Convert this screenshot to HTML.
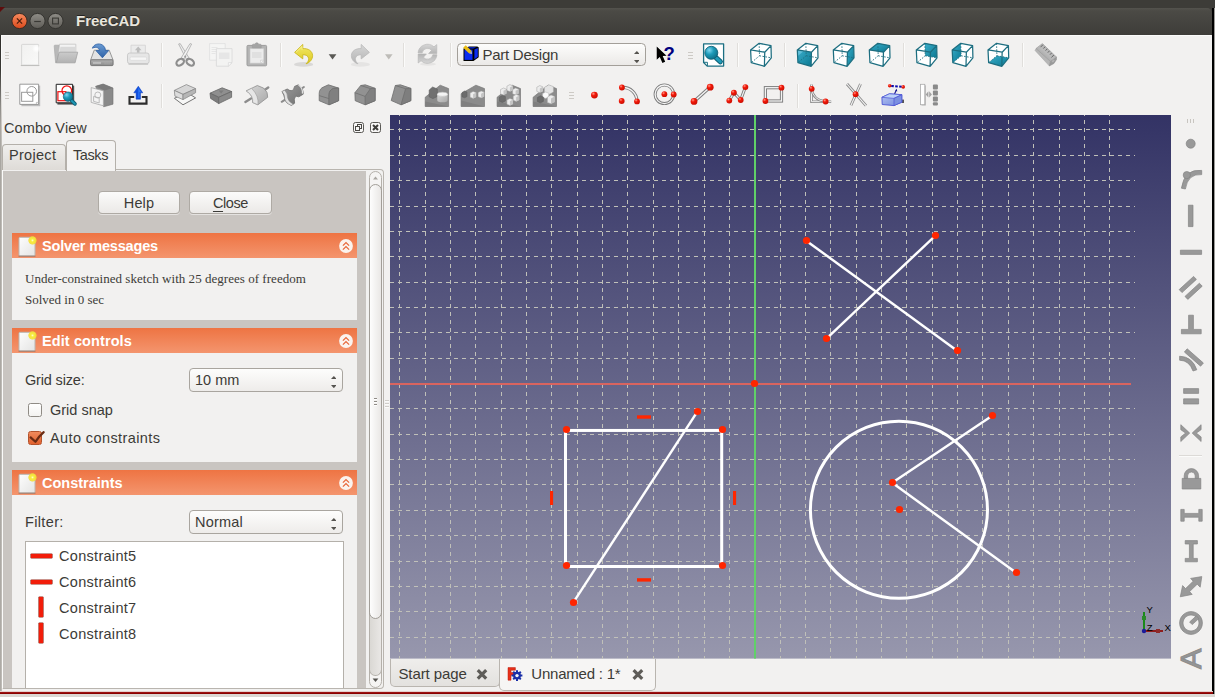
<!DOCTYPE html>
<html>
<head>
<meta charset="utf-8">
<title>FreeCAD</title>
<style>
html,body{margin:0;padding:0;}
body{width:1215px;height:697px;overflow:hidden;position:relative;background:#f2f1f0;font-family:"Liberation Sans","DejaVu Sans",sans-serif;font-size:14px;color:#3c3b37;}
.abs{position:absolute;}
.t{position:absolute;white-space:nowrap;line-height:18px;font-size:14.5px;color:#3c3b37;}
#topstrip{left:0;top:0;width:1215px;height:14px;background:#3d3c38;}
#titlebar{left:0;top:8px;width:1212px;height:27px;background:linear-gradient(#54534e 0,#4b4a45 3px,#3e3d39 100%);border-top-left-radius:5px;border-top-right-radius:5px;}
#title{left:76px;top:12px;color:#e9e5dc;font-weight:bold;font-size:15px;line-height:18px;text-shadow:0 -1px 0 #222;}
.wbtn{width:15px;height:15px;border-radius:50%;top:13px;box-sizing:border-box;}
#rightedge{left:1212px;top:8px;width:2px;height:686px;background:#000;}
#rightgray{left:1214px;top:8px;width:1px;height:689px;background:#9c9a97;}
#leftedge{left:0;top:35px;width:1px;height:656px;background:linear-gradient(#2f2e2b 0,#3a3935 35px,#8b8985 70px,#a9a6a1 90px,#aeaba6 100%);}
#leftedge2{left:1px;top:35px;width:1px;height:656px;background:linear-gradient(#fbfbfa 0,#fbfbfa 40px,#d0cdc9 80px,#bebbb6 110px,#bebbb6 100%);}
#bottomred{left:0;top:691px;width:1213px;height:4px;background:linear-gradient(to bottom,#e4cfcd 0,#e4cfcd 1px,#9a1212 1px,#9a1212 2px,#8b0000 2px,#8b0000 3px,#c9aaa6 3px,#c9aaa6 4px);}
#bottomgray{left:0;top:694px;width:1215px;height:3px;background:#dbd8d4;}
/* dock */
.tab{position:absolute;box-sizing:border-box;border:1px solid #b4b0aa;border-bottom:none;border-radius:4px 4px 0 0;}
#pane{left:2px;top:169px;width:382px;height:520px;box-sizing:border-box;border:1px solid #b9b5af;border-left-color:#fbfbfa;border-radius:0 4px 4px 0;background:#f2f1f0;}
#panegray{left:3px;top:171px;width:363px;height:517px;background:#c9c5c1;}
.btn{position:absolute;box-sizing:border-box;border:1px solid #aeaaa4;border-radius:4px;background:linear-gradient(#fbfbfa,#ebe9e7);text-align:center;font-size:14.5px;line-height:22px;color:#3c3b37;box-shadow:0 1px 0 rgba(255,255,255,.5);}
.hdr{position:absolute;left:12px;width:345px;height:25px;background:linear-gradient(#ee7443,#f4956e);}
.hdr .ht{position:absolute;left:30px;top:3.600px;font-weight:bold;font-size:14.5px;line-height:18px;color:#fff;white-space:nowrap;}
.hdr .pg{position:absolute;left:6px;top:3px;}
.hdr .chev{position:absolute;left:327px;top:6px;}
.box{position:absolute;left:12px;width:345px;background:#f2f1f0;}
.combo{position:absolute;box-sizing:border-box;left:189px;width:154px;height:24px;border:1px solid #a9a59f;border-radius:4px;background:linear-gradient(#fdfdfc,#eeecea);}
.combo .ct{position:absolute;left:5px;top:2.500px;font-size:14.5px;line-height:18px;white-space:nowrap;}
.cb{position:absolute;box-sizing:border-box;left:28px;width:14px;height:14px;border:1px solid #8f8b85;border-radius:2.5px;background:linear-gradient(#fff,#f3f2f0);}
.serif{font-family:"Liberation Serif","DejaVu Serif",serif;}
</style>
</head>
<body>
<div id="topstrip" class="abs"></div>
<div id="titlebar" class="abs"></div>
<div id="title" class="abs">FreeCAD</div>
<svg class="abs" style="left:10px;top:11px" width="56" height="20" viewBox="10 11 56 20">
<defs>
<linearGradient id="gclose" x1="0" y1="0" x2="0" y2="1"><stop offset="0" stop-color="#f58a5e"/><stop offset="1" stop-color="#dc4a1c"/></linearGradient>
<linearGradient id="ggray" x1="0" y1="0" x2="0" y2="1"><stop offset="0" stop-color="#8f8d87"/><stop offset="1" stop-color="#5e5c57"/></linearGradient>
</defs>
<circle cx="19.5" cy="21" r="7.6" fill="url(#gclose)" stroke="#3a2a22" stroke-width="1"/>
<path d="M16.900 18.400l5.200 5.200M22.100 18.400l-5.200 5.200" stroke="#4a1d0c" stroke-width="1.250" fill="none"/>
<circle cx="37.5" cy="21" r="7.6" fill="url(#ggray)" stroke="#34332f" stroke-width="1"/>
<path d="M34.200 21.500h6.600" stroke="#3a3935" stroke-width="1.200"/>
<circle cx="55.5" cy="21" r="7.6" fill="url(#ggray)" stroke="#34332f" stroke-width="1"/>
<rect x="52.6" y="18.1" width="5.8" height="5.8" fill="none" stroke="#3a3935" stroke-width="1.100"/>
</svg>
<svg class="abs" style="left:0;top:7px" width="6" height="6"><path d="M0 0h5L0 5z" fill="#5e0d0d"/></svg>
<!-- toolbars (rows 1 and 2) -->
<div class="abs" style="left:1px;top:35px;width:1210px;height:1px;background:#fbfbfa"></div>
<svg class="abs" style="left:0;top:35px" width="1212" height="80" viewBox="0 35 1212 80">
<defs>
<linearGradient id="gPaper" x1="0" y1="0" x2="1" y2="1"><stop offset="0" stop-color="#f1f1f0"/><stop offset="1" stop-color="#f9f9f8"/></linearGradient>
<radialGradient id="gWhiteGlow"><stop offset="0" stop-color="#fff"/><stop offset="0.3" stop-color="#fff" stop-opacity=".9"/><stop offset="1" stop-color="#fff" stop-opacity="0"/></radialGradient>
<linearGradient id="gRuler" x1="0" y1="1" x2="1" y2="0"><stop offset="0" stop-color="#8e8e8e"/><stop offset="0.5" stop-color="#bcbcbc"/><stop offset="1" stop-color="#9e9e9e"/></linearGradient>
<linearGradient id="gFold" x1="0" y1="0" x2="0" y2="1"><stop offset="0" stop-color="#cbcbcb"/><stop offset="1" stop-color="#b2b2b2"/></linearGradient>
<linearGradient id="gDrive" x1="0" y1="0" x2="0" y2="1"><stop offset="0" stop-color="#b4b4b4"/><stop offset="1" stop-color="#8a8a8a"/></linearGradient>
<linearGradient id="gBlueArr" x1="0" y1="0" x2="0" y2="1"><stop offset="0" stop-color="#6b9bd3"/><stop offset="1" stop-color="#2f63a8"/></linearGradient>
<linearGradient id="gYel" x1="0" y1="0" x2="0" y2="1"><stop offset="0" stop-color="#f3ea6a"/><stop offset="1" stop-color="#dcc81e"/></linearGradient>
<linearGradient id="gGrayArr" x1="0" y1="0" x2="0" y2="1"><stop offset="0" stop-color="#d6d6d6"/><stop offset="1" stop-color="#b4b4b4"/></linearGradient>
<radialGradient id="gLens" cx="0.35" cy="0.3" r="0.75"><stop offset="0" stop-color="#7fd6f0"/><stop offset="0.45" stop-color="#1c9ab8"/><stop offset="1" stop-color="#0c6c86"/></radialGradient>
<linearGradient id="gTeal" x1="0" y1="0" x2="1" y2="1"><stop offset="0" stop-color="#3aaecb"/><stop offset="1" stop-color="#0b7891"/></linearGradient>
<linearGradient id="gCombo" x1="0" y1="0" x2="0" y2="1"><stop offset="0" stop-color="#fdfdfc"/><stop offset="1" stop-color="#ebe9e7"/></linearGradient>
<radialGradient id="gRed" cx="0.35" cy="0.3" r="0.8"><stop offset="0" stop-color="#ff9a8a"/><stop offset="0.35" stop-color="#f21a0a"/><stop offset="1" stop-color="#c40b00"/></radialGradient>
<linearGradient id="gG1" x1="0" y1="0" x2="1" y2="1"><stop offset="0" stop-color="#d8d8d8"/><stop offset="1" stop-color="#a8a8a8"/></linearGradient>
<linearGradient id="gG2" x1="0" y1="0" x2="1" y2="1"><stop offset="0" stop-color="#9c9c9c"/><stop offset="1" stop-color="#6e6e6e"/></linearGradient>
<linearGradient id="gG3" x1="0" y1="0" x2="0" y2="1"><stop offset="0" stop-color="#8e8e8e"/><stop offset="1" stop-color="#7a7a7a"/></linearGradient>
<linearGradient id="gBlueBox" x1="0" y1="0" x2="1" y2="1"><stop offset="0" stop-color="#b7c6f2"/><stop offset="1" stop-color="#6f86dd"/></linearGradient>
<g id="cubeFaces" fill="#fff" stroke="none"><path d="M1.6 6.9L10.15 0.3L22 2.6L22.3 14.8L15.4 23.3L2.25 19.7z"/></g>
<g id="cubeLines" fill="none" stroke="#1d6e80" stroke-width="1.25" stroke-linejoin="round"><path d="M1.6 6.9L15.75 9.2L15.4 23.3L2.25 19.7zM1.6 6.9L10.15 0.3L22 2.6L15.75 9.2M22 2.6L22.3 14.8L15.4 23.3"/><path d="M10.15 0.3L10.5 12.8L2.25 19.7M10.5 12.8L22.3 14.8" stroke-width="0.9" stroke-dasharray="1.6 1.4"/></g>
<g id="rdot"><circle r="3.4" fill="url(#gRed)"/></g>
<g id="rdots"><circle r="2.9" fill="url(#gRed)"/></g>
</defs>
<!-- handles -->
<g stroke="#cdcac5" stroke-width="1" shape-rendering="crispEdges">
<path d="M5 52.5h4M5 55.5h4M5 58.5h4M5 92.5h4M5 95.5h4M5 98.5h4M688 52.5h5M688 55.5h5M688 58.5h5M569 92.5h5M569 95.5h5M569 98.5h5"/>
</g>
<!-- separators -->
<g stroke-width="1" shape-rendering="crispEdges"><path d="M161.5 43v24M280.5 43v24M403.5 43v24M450.5 43v24M737.5 43v24M784.5 43v24M903.5 43v24M1022.5 43v24M161.5 84v24M797.5 84v24" stroke="#e0dedb"/><path d="M162.5 43v24M281.5 43v24M404.5 43v24M451.5 43v24M738.5 43v24M785.5 43v24M904.5 43v24M1023.5 43v24M162.5 84v24M798.5 84v24" stroke="#fbfbfa"/></g>
<!-- new doc (disabled) -->
<g><rect x="21.600" y="44.400" width="17" height="20.800" rx=".6" fill="url(#gPaper)" stroke="#d4d4d2" stroke-width=".9"/><path d="M20.800 65.500h18.600" stroke="#c0c0be" stroke-width="1.100"/><circle cx="36.400" cy="48.600" r="4.400" fill="url(#gWhiteGlow)"/></g>
<!-- open folder (disabled) -->
<g><path d="M54.200 45.900q0-.7.700-.7h4.300l-1.400 15l-1.600 2.600h-.6z" fill="#b9b9b9" stroke="#a9a9a9" stroke-width=".7"/><path d="M59.600 44.200h16.200v9.200h-17.200z" fill="#f3f3f3" stroke="#c4c4c4" stroke-width=".8"/><path d="M60.400 46.800h15v6h-15.800z" fill="#d9d9d9"/><path d="M59.200 52.200h18.500l-2.600 10.600H56.300z" fill="url(#gFold)" stroke="#a2a2a2" stroke-width=".8" stroke-linejoin="round"/></g>
<!-- save -->
<g><path d="M94.2 50.2h15l3.9 9.9H90.6z" fill="#e3e3e3" stroke="#8f8f8f" stroke-width=".9"/><rect x="90.6" y="59.8" width="22.5" height="5.8" rx="1" fill="url(#gDrive)" stroke="#6f6f6f" stroke-width=".9"/><path d="M93 63h8" stroke="#d8d8d8" stroke-width="1"/><path d="M105 61.5v3M107 61.5v3M109 61.5v3" stroke="#a9a9a9" stroke-width=".8"/><path d="M92.4 48.2c1-3.6 6.2-5.6 10-3.2c2.3 1.5 3 3.6 3 5.6h3.2l-6.2 7.2l-6.4-7.2h3.4c0-2.6-3-4.4-7-2.4z" fill="url(#gBlueArr)" stroke="#2a5da3" stroke-width=".8" stroke-linejoin="round"/></g>
<!-- print (disabled) -->
<g><path d="M131 45.2h14.4v9H131z" fill="#ebebeb" stroke="#d2d2d2" stroke-width=".8"/><path d="M138.2 46.6l3.3 3.6h-2v2.6h-2.6v-2.6h-2z" fill="#bdbdbd"/><rect x="127.5" y="53" width="21.6" height="10.6" rx="2.2" fill="#e6e6e6" stroke="#c6c6c6" stroke-width=".9"/><rect x="130" y="57" width="16.6" height="3.4" rx="1.2" fill="#f6f6f6" stroke="#d5d5d5" stroke-width=".6"/><path d="M128.5 64.2h19.6" stroke="#bfbfbf" stroke-width="1"/></g>
<!-- cut -->
<g><path d="M178.6 44l1.6-.4l9.6 15.6l-2.8 1.4z" fill="#ededed" stroke="#a9a9a9" stroke-width=".8"/><path d="M191.6 44l-1.6-.4l-9.6 15.6l2.8 1.4z" fill="#f3f3f3" stroke="#a9a9a9" stroke-width=".8"/><ellipse cx="180.2" cy="62.2" rx="4.2" ry="2.9" transform="rotate(-38 180.2 62.2)" fill="none" stroke="#8e8e8e" stroke-width="2.2"/><ellipse cx="190.2" cy="62.2" rx="4.2" ry="2.9" transform="rotate(38 190.2 62.2)" fill="none" stroke="#8e8e8e" stroke-width="2.2"/><circle cx="185.2" cy="56.6" r="1" fill="#9a9a9a"/></g>
<!-- copy (disabled) -->
<g><path d="M209.6 43.6h15.6v16.6h-15.6z" fill="#f5f5f4" stroke="#dedede" stroke-width=".8"/><path d="M211.5 47.5h6M211.5 49.5h6M211.5 51.5h6M211.5 53.5h4" stroke="#e2e2e2" stroke-width=".8"/><path d="M216.4 48.6h15.6v14l-3.6 3.6h-12z" fill="#f3f3f2" stroke="#d8d8d8" stroke-width=".8"/><path d="M219 52.5h10.5v6.5H219z" fill="#e6e6e6"/><path d="M228.4 66.2v-3.6h3.6z" fill="#fafafa" stroke="#d8d8d8" stroke-width=".7"/></g>
<!-- paste (disabled) -->
<g><rect x="247" y="45.4" width="19.6" height="20.4" rx="1" fill="#b4b4b4" stroke="#9c9c9c" stroke-width="1"/><path d="M250 48.6h13.8v14.6H250z" fill="#ececec" stroke="#c8c8c8" stroke-width=".6"/><path d="M252 52h9.5v6H252z" fill="#e0e0e0"/><path d="M260.6 63.2v-3h3.2z" fill="#fafafa" stroke="#c4c4c4" stroke-width=".6"/><path d="M252.4 47.8v-2.6q0-1 1-1h1.6q.4-1.4 1.8-1.4t1.8 1.4h1.6q1 0 1 1v2.6z" fill="#a4a4a4" stroke="#9a9a9a" stroke-width=".6"/></g>
<!-- undo -->
<g><ellipse cx="303.6" cy="64.4" rx="9.6" ry="2.4" fill="#000" opacity=".1"/><path d="M294.6 52.4l8.2-8v4.2c5.6-.4 9.6 2.6 9.8 6.8c.2 4-3 7.4-6.6 8.4c1.8-1.6 2.9-3.4 2.6-5.4c-.3-2.3-2.600-3.800-5.800-3.700v4.200z" fill="url(#gYel)" stroke="#c9b51a" stroke-width=".8" stroke-linejoin="round"/><path d="M296 52.300l6-5.800v3.200" fill="none" stroke="#faf5a8" stroke-width=".8" opacity=".8"/></g>
<path d="M328.7 54.2h7.700l-3.850 5.300z" fill="#5a5955"/>
<!-- redo (disabled) -->
<g><ellipse cx="360.4" cy="64.4" rx="9.600" ry="2.400" fill="#000" opacity=".05"/><path d="M369.400 52.400l-8.200-8v4.200c-5.600-.4-9.600 2.600-9.800 6.800c-.2 4 3 7.400 6.600 8.400c-1.800-1.600-2.900-3.400-2.600-5.400c.3-2.300 2.600-3.800 5.800-3.700v4.200z" fill="url(#gGrayArr)" stroke="#b9b9b9" stroke-width=".8" stroke-linejoin="round"/></g>
<path d="M385 54.200h7.600l-3.800 5.300z" fill="#bebcb8"/>
<!-- refresh (disabled) -->
<g fill="url(#gGrayArr)" stroke="#b4b4b4" stroke-width=".6" stroke-linejoin="round"><ellipse cx="428" cy="64.200" rx="8" ry="1.600" fill="#000" opacity=".05" stroke="none"/><path id="rfr" d="M418.050 52.800A9.500 9.500 0 0 1 433.980 46.850L436.800 44.600V53.600H428.600L431.640 50.330A5.400 5.400 0 0 0 422.180 52.860z"/><use href="#rfr" transform="rotate(180 427.500 53.800)"/></g>
<!-- workbench icon drawn later on top (html) -->
<!-- whats this cursor -->
<path d="M656.700 46.500v13.300l3.100-2.800l2.600 6l2.800-1.200l-2.500-5.700l3.900-.3z" fill="#000" stroke="#fff" stroke-width="1" stroke-linejoin="round" paint-order="stroke"/>
<!-- zoom fit -->
<g><path d="M703.600 43.900h20v22.200h-16.400l-3.600-3.600z" fill="#fff" stroke="#1b6f82" stroke-width="1.3" stroke-linejoin="round"/><path d="M703.800 62.300h3.600v3.600" fill="none" stroke="#1b6f82" stroke-width="1"/><path d="M716.200 57.800l4.100 3.900" stroke="#0e6178" stroke-width="5.200" stroke-linecap="round"/><path d="M716.600 58.200l3.700 3.500" stroke="#1f9ab8" stroke-width="3.200" stroke-linecap="round"/><circle cx="711.300" cy="52.800" r="6.500" fill="url(#gLens)" stroke="#0e6178" stroke-width=".9"/></g>
<!-- cubes -->
<g transform="translate(749 43)"><use href="#cubeFaces"/><use href="#cubeLines"/></g>
<g transform="translate(795.700 43)"><use href="#cubeFaces"/><path d="M1.600 6.900L15.750 9.200L15.400 23.300L2.250 19.700z" fill="url(#gTeal)"/><path d="M1.6 6.900L8 8l-5.900 5z" fill="#7fd0ea" opacity=".6"/><use href="#cubeLines"/></g>
<g transform="translate(831.700 43)"><use href="#cubeFaces"/><path d="M15.750 9.200L22 2.600L22.300 14.800L15.400 23.300z" fill="url(#gTeal)"/><use href="#cubeLines"/></g>
<g transform="translate(867.700 43)"><use href="#cubeFaces"/><path d="M1.600 6.900L10.150 0.300L22 2.600L15.750 9.200z" fill="url(#gTeal)"/><use href="#cubeLines"/></g>
<g transform="translate(914.700 43)"><use href="#cubeFaces"/><path d="M10.150 0.300L22 2.600L22.300 14.800L10.500 12.800z" fill="url(#gTeal)"/><use href="#cubeLines"/></g>
<g transform="translate(950.600 43)"><use href="#cubeFaces"/><path d="M1.600 6.900L10.150 0.300L10.500 12.800L2.250 19.700z" fill="url(#gTeal)"/><use href="#cubeLines"/></g>
<g transform="translate(986.400 43)"><use href="#cubeFaces"/><path d="M2.250 19.700L10.500 12.800L22.300 14.800L15.400 23.300z" fill="url(#gTeal)"/><use href="#cubeLines"/></g>
<!-- ruler (disabled) -->
<g stroke-linejoin="round"><path d="M1035 50.400L1036 48.500L1050.400 61.400L1049.400 66z" fill="#b6b6b6" stroke="#a4a4a4" stroke-width=".5"/><path d="M1050.400 61.400L1056.500 57L1056.500 59.500L1054 63.400L1049.400 66z" fill="#9a9a9a" stroke="#8e8e8e" stroke-width=".5"/><path d="M1036 48.500L1042.300 43.600L1056.500 57L1050.400 61.400z" fill="url(#gRuler)" stroke="#909090" stroke-width=".5"/><path d="M1042.90 44.72L1040.56 47.19M1045.08 46.78L1043.43 48.52M1047.27 48.84L1045.62 50.58M1049.45 50.90L1047.80 52.65M1051.63 52.96L1049.99 54.71M1053.82 55.02L1051.48 57.50" stroke="#5e5e5e" stroke-width=".9"/><ellipse cx="1053.200" cy="61" rx="1.600" ry="1" transform="rotate(-36 1053.200 61)" fill="#b4b4b4"/></g>

<!-- new sketch -->
<g><path d="M21.400 85.600h18.800v20.600H21.400z" fill="#bdbdbd"/><path d="M19.800 84.200h18.800v20.200H19.800z" fill="#fff" stroke="#8e8e8e" stroke-width=".9"/><circle cx="31.700" cy="91.300" r="4.800" fill="none" stroke="#9a9a9a" stroke-width="1"/><rect x="21.600" y="92.300" width="11.200" height="9" fill="none" stroke="#9a9a9a" stroke-width="1"/><path d="M36.400 104.400v-2h2.200" fill="none" stroke="#aaa" stroke-width=".7"/></g>
<!-- edit sketch -->
<g><path d="M57.400 85.600h16.800v19H57.400z" fill="#555"/><path d="M56.200 84.300h16.400v18.500H56.200z" fill="#fff" stroke="#222" stroke-width="1"/><circle cx="66.800" cy="90.600" r="4.800" fill="none" stroke="#f01010" stroke-width="1.200"/><rect x="57.900" y="91.700" width="8" height="9" fill="none" stroke="#f01010" stroke-width="1.200"/><path d="M71.400 100.400l3.600 3.500" stroke="#0e6178" stroke-width="3.600" stroke-linecap="round"/><path d="M71.800 100.800l3.100 3" stroke="#1f9ab8" stroke-width="1.800" stroke-linecap="round"/><circle cx="68" cy="96.700" r="4.700" fill="url(#gLens)" stroke="#0e6178" stroke-width=".7"/></g>
<!-- leave sketch -->
<g><path d="M95.600 86.300L103.100 84l9.900 4v16.200l-9.300 2.600z" fill="#8a8a8a" stroke="#707070" stroke-width=".6"/><path d="M95.600 86.300L103.100 84l9.900 4l-8.400 2.600z" fill="#7a7a7a"/><path d="M91.200 87.600l12.200 3.200v15l-12.200-3.400z" fill="#f4f4f4" stroke="#a9a9a9" stroke-width=".8"/><circle cx="97.800" cy="95" r="3" fill="none" stroke="#b4b4b4" stroke-width=".9"/><path d="M93.600 96.400l5.600 1.500v5l-5.600-1.500z" fill="none" stroke="#b4b4b4" stroke-width=".9"/></g>
<!-- map sketch -->
<g><path d="M134.200 97h-4.700v6.600h17v-6.600h-4.700" fill="none" stroke="#2c2c2c" stroke-width="2.100"/><path d="M138.300 86.200l4.500 6.600h-2.300v6.400h-4.400v-6.400h-2.300z" fill="#0f4fe0" stroke="#0a3cc0" stroke-width=".5"/><path d="M138.300 87.600l2.800 4.400h-1.700v6h-1z" fill="#3d8bff" opacity=".7"/></g>
<!-- pad -->
<g stroke="#8a8a8a" stroke-width=".8" stroke-linejoin="round"><path d="M174.400 98.300l8.600 6.500l12.600-6.900l-8.800-5.500z" fill="#f7f7f6" stroke="#686868" stroke-width=".9"/><path d="M174.300 90.400L186.400 84.600L195.600 88.600L183 94.400z" fill="#d6d6d6"/><path d="M174.300 90.400L183 94.400L183 99.600L174.900 96.100z" fill="#dcdcdc"/><path d="M183 94.400L195.600 88.600L195.600 92.700L183 99.600z" fill="#b6b6b6"/></g>
<!-- pocket -->
<g stroke="#666" stroke-width=".8" stroke-linejoin="round"><path d="M210 93.200L222.100 87.800L231.600 91.500L218.700 97.300z" fill="#8f8f8f"/><path d="M210 93.200L218.700 97.300L218.700 103.600L210.600 98.400z" fill="#7c7c7c"/><path d="M218.700 97.300L231.600 91.500L231.600 97.300L218.700 103.600z" fill="#8a8a8a"/><path d="M218.600 90.600h5l-2.400 3z" fill="#7c7c7c" stroke="none"/></g>
<!-- revolution -->
<g><path d="M245.400 101.900l5.600-3.500M264.600 89.900l3.600-2.400" stroke="#8c8c8c" stroke-width="2.400" stroke-linecap="round"/><path d="M246.300 90.900L257.300 85.500L263.600 88.100Q268.300 92 267.700 97.300L257.900 104.800L252.700 102.500Q253.500 95.500 246.300 90.900z" fill="url(#gG1)" stroke="#8e8e8e" stroke-width=".8" stroke-linejoin="round"/><path d="M246.300 90.900Q253.500 95.500 252.700 102.500L257.900 104.800Q259.200 96 251.600 88.300z" fill="#e6e6e6" stroke="#9a9a9a" stroke-width=".6"/></g>
<!-- groove -->
<g><path d="M281.700 101.800l4.600-3M300.400 89.300l3.500-2.300" stroke="#8c8c8c" stroke-width="2" stroke-linecap="round"/><path d="M282 91.600l5.200-2.600q6 4.600 7.400-2.600l3.800-1.600q5.200 3.400 4.800 9.400l-4.400 2.600q-5.600-2.400-4.200 6.400l-3.200 2.200q-6.200-2.400-6.600-6.400q-.6-4-2.800-7.400z" fill="url(#gG2)" stroke="#6c6c6c" stroke-width=".8" stroke-linejoin="round"/><path d="M282 91.600q3 3 2.800 7.400q1 4.400 6.600 6.400l1.800-1.200q-5-2.600-5.600-6.400q-.2-4.800-2.800-7.600z" fill="#e2e2e2" stroke="#8a8a8a" stroke-width=".5"/><path d="M298.400 84.800q4.600 3.200 4 8.800" fill="none" stroke="#e0e0e0" stroke-width="1.200"/></g>
<!-- fillet -->
<g stroke="#6e6e6e" stroke-width=".8" stroke-linejoin="round"><path d="M319.200 93.400Q319.200 88.600 324 86.800L328.400 84.800L338.600 88.100V100.700L329 104.800L319.200 100.700z" fill="#929292"/><path d="M329 104.800V95Q329 90 333.600 88.400L338.600 88.100" fill="none"/><path d="M319.200 95.600l9.800 3" fill="none"/><path d="M329 95Q329 90 333.600 88.400L338.600 88.100V100.700L329 104.800z" fill="#808080"/></g>
<!-- chamfer -->
<g stroke="#6e6e6e" stroke-width=".8" stroke-linejoin="round"><path d="M354.900 92.700L360.700 85.500L365.300 84.800L375.100 88.300V100.700L365.100 104.800L355.200 100.700z" fill="#929292"/><path d="M365.100 104.800V96.400L370.400 88.600L375.100 88.300V100.700z" fill="#808080"/><path d="M354.900 92.700l10.200 3.700M360.700 85.500l9.700 3.100" fill="none"/></g>
<!-- draft -->
<g stroke="#6e6e6e" stroke-width=".8" stroke-linejoin="round"><path d="M395.300 85.500L400.400 84.800L410.800 88.300V100.700L401 104.800L391.200 100.500z" fill="#909090"/><path d="M401 104.800L405.600 88.700L410.800 88.300V100.700z" fill="#7e7e7e"/><path d="M395.300 85.500l10.300 3.200" fill="none"/></g>
<!-- mirrored -->
<g id="patbase"><path d="M425.200 97.300L440.200 85.200L448.600 88.600V106.500H425.200z" fill="#8b8b8b" stroke="#787878" stroke-width=".7" stroke-linejoin="round"/><path d="M425.200 101.600l23.400 4.900h-23.400z" fill="#7f7f7f"/></g>
<path d="M429.200 90l3.400-3l4.700 2v7.400l-4.400 2.200l-3.700-1.800z" fill="#707070" stroke="#5e5e5e" stroke-width=".6"/>
<path d="M437.300 94.200v6a5.150 2 0 0 0 10.300 0v-6z" fill="url(#gG1)"/><ellipse cx="442.450" cy="94.200" rx="5.150" ry="2" fill="#f4f4f4" stroke="#c8c8c8" stroke-width=".5"/>
<!-- linear pattern -->
<g><path d="M461.100 93.800L475.900 85.200L484.500 88.600V106.500H461.100z" fill="#8b8b8b" stroke="#787878" stroke-width=".7" stroke-linejoin="round"/><path d="M461.100 100.600l23.400 5.900h-23.400z" fill="#7f7f7f"/>
<path d="M462 92.600l2.600-1.600l2.400 1v4.600l-2.400 1.200l-2.600-1z" fill="#6c6c6c" stroke="#5c5c5c" stroke-width=".5"/>
<g id="lcube"><path d="M470.100 93l3-1.600l3 1.200v4.400l-3 1.400l-3-1.200z" fill="#ececec" stroke="#a0a0a0" stroke-width=".5"/><path d="M473.100 94.200l3-1.600v4.400l-3 1.400z" fill="#c4c4c4"/></g>
<use href="#lcube" x="8" y="-0.500"/></g>
<!-- polar pattern -->
<g><path d="M497.100 97.300L512.100 85.200L520.500 88.600V106.500H497.100z" fill="#8b8b8b" stroke="#787878" stroke-width=".7" stroke-linejoin="round"/><path d="M497.100 101.600l23.400 4.900h-23.400z" fill="#7f7f7f"/>
<use href="#lcube" x="30.400" y="-3.400"/><use href="#lcube" x="36.800" y="-6.800"/><use href="#lcube" x="42.500" y="-3.400"/><use href="#lcube" x="43.100" y="3"/><use href="#lcube" x="36.800" y="7"/>
<path d="M499.400 97l3-1.600l3 1.200v4.400l-3 1.400l-3-1.200z" fill="#6c6c6c" stroke="#5c5c5c" stroke-width=".5"/></g>
<!-- multitransform -->
<g><path d="M533.100 97.300L548.100 85.200L556.500 88.600V106.500H533.100z" fill="#8b8b8b" stroke="#787878" stroke-width=".7" stroke-linejoin="round"/><path d="M533.100 101.600l23.400 4.900h-23.400z" fill="#7f7f7f"/>
<use href="#lcube" x="66.700" y="-5.800"/>
<path d="M544.400 87.400l4.400-2.600l4.600 1.800v5.400l-4.400 2.400l-4.600-1.800z" fill="#e4e4e4" stroke="#a8a8a8" stroke-width=".5"/>
<path d="M542.600 93.600l3-1.600l3.200 1.200v3.600l-3 1.600l-3.200-1.200z" fill="#fafafa" stroke="#b0b0b0" stroke-width=".5"/>
<path d="M547.400 97l3.600-2l3.600 1.400v5.600l-3.600 1.800l-3.600-1.400z" fill="#ececec" stroke="#a8a8a8" stroke-width=".5"/><path d="M551 98.400l3.600-2v5.600l-3.600 1.800z" fill="#c0c0c0"/>
<path d="M537.400 97.400l3-1.600l3 1.200v4.400l-3 1.400l-3-1.200z" fill="#6a6a6a" stroke="#5a5a5a" stroke-width=".5"/></g>
<!-- sketcher geometry -->
<use href="#rdot" x="594.400" y="95.100"/>
<!-- arc -->
<g><path d="M622 87.500A14 14 0 0 1 637 101.400" fill="none" stroke="#7c7c7c" stroke-width="3.200"/><path d="M622 87.500A14 14 0 0 1 637 101.400" fill="none" stroke="#f4f4f4" stroke-width="1.400"/><use href="#rdots" x="621.900" y="87.500"/><use href="#rdots" x="621.700" y="101"/><use href="#rdots" x="637" y="101.400"/></g>
<!-- circle -->
<g><circle cx="664.400" cy="94.300" r="9.300" fill="none" stroke="#7c7c7c" stroke-width="3"/><circle cx="664.400" cy="94.300" r="9.300" fill="none" stroke="#f4f4f4" stroke-width="1.300"/><use href="#rdots" x="664.400" y="94.200"/><use href="#rdots" x="673.700" y="94.500"/></g>
<!-- line -->
<g><path d="M694 101.400L710.200 87.100" stroke="#7c7c7c" stroke-width="3.400"/><path d="M694 101.400L710.200 87.100" stroke="#f4f4f4" stroke-width="1.400"/><use href="#rdot" x="694" y="101.400"/><use href="#rdot" x="710.200" y="87.200"/></g>
<!-- polyline -->
<g><path d="M729.300 100.600L733.900 92.700L740.700 100L745.400 87.100" fill="none" stroke="#7c7c7c" stroke-width="3"/><path d="M729.300 100.600L733.900 92.700L740.700 100L745.400 87.100" fill="none" stroke="#f4f4f4" stroke-width="1.200"/><use href="#rdots" x="729.300" y="100.600"/><use href="#rdots" x="733.900" y="92.700"/><use href="#rdots" x="740.700" y="100"/><use href="#rdots" x="745.400" y="87.100"/></g>
<!-- rectangle -->
<g><rect x="765.400" y="87.700" width="16.100" height="13.300" fill="none" stroke="#7c7c7c" stroke-width="3.200"/><rect x="765.400" y="87.700" width="16.100" height="13.300" fill="none" stroke="#f4f4f4" stroke-width="1.300"/><use href="#rdots" x="765.400" y="101"/><use href="#rdots" x="781.500" y="87.700"/></g>
<!-- sketch fillet -->
<g><path d="M811.500 84.600V101.700H831.200" fill="none" stroke="#8a8a8a" stroke-width="2.600"/><path d="M811.500 84.600V101.700H831.200" fill="none" stroke="#f4f4f4" stroke-width="1"/><path d="M811.700 88.800Q813 100.200 825.600 101.500" fill="none" stroke="#8a8a8a" stroke-width="2.400"/><path d="M811.700 88.800Q813 100.200 825.600 101.500" fill="none" stroke="#f4f4f4" stroke-width=".9"/><use href="#rdots" x="811.700" y="88.800"/><use href="#rdots" x="825.600" y="101.500"/></g>
<!-- trim -->
<g><path d="M847 84L866 105.600M860.500 84L851 105.200" stroke="#8a8a8a" stroke-width="2.800"/><path d="M847 84L866 105.600M860.500 84L851 105.200" stroke="#f4f4f4" stroke-width="1.100"/><use href="#rdots" x="855.600" y="94.200"/></g>
<!-- external geometry -->
<g><path d="M901.600 99.600h2.400v3.400h-2.400z" fill="#555"/><path d="M881.900 97.300L889.400 93.800L901.800 94.700V102.200L894 105.600L882.200 104.500z" fill="url(#gBlueBox)" stroke="#4a52d4" stroke-width=".9" stroke-linejoin="round"/><path d="M881.900 97.300L889.400 93.800L901.800 94.700L894 98.400z" fill="#bcd2f8" stroke="#4a52d4" stroke-width=".7" stroke-linejoin="round"/><path d="M894 98.400L901.800 94.700V102.200L894 105.600z" fill="#7a8fe0" stroke="#4a52d4" stroke-width=".7" stroke-linejoin="round"/><path d="M889.700 85.800l13.500 1.100" stroke="#0c0cb0" stroke-width="2.100" stroke-dasharray="2.600 1.400" stroke-dashoffset="-1.500"/><path d="M894.600 93.800l1.800-3.800" stroke="#101090" stroke-width="1.100"/><path d="M896.700 88.800l.6 2.600l-2-.9z" fill="#101090"/><circle cx="889.700" cy="85.800" r="1.800" fill="url(#gRed)"/><circle cx="903.200" cy="86.900" r="1.800" fill="url(#gRed)"/></g>
<!-- construction mode -->
<g><path d="M921.500 85.300h4.300v20.200h-4.300z" fill="#b4b4b4"/><rect x="920.500" y="84.300" width="4.300" height="20.400" fill="#fff" stroke="#ababab" stroke-width=".8"/><path d="M925.700 94.400l2.700-3.100v6.200zM931.900 94.400l-2.700-3.100v6.200z" fill="#a2a2a2"/><g fill="#8a8a8a"><rect x="932.900" y="84.500" width="5" height="5" rx="1"/><rect x="932.900" y="90.400" width="5" height="5" rx="1"/><rect x="932.900" y="96.400" width="5" height="5" rx="1"/><rect x="932.900" y="102.300" width="5" height="3.300" rx="1"/></g></g>

</svg>
<!-- workbench combo -->
<div class="abs" style="left:457px;top:43px;width:189px;height:23px;box-sizing:border-box;border:1px solid #a39f99;border-radius:4.5px;background:linear-gradient(#fdfdfc,#ebe9e7);"></div>
<div class="t" id="pd" style="left:482.400px;top:45.800px;font-size:15px;letter-spacing:-0.24px">Part Design</div>
<svg class="abs" style="left:633.600px;top:51px" width="5.700" height="12.200" viewBox="0 0 5.700 12.200"><use href="#spinarr"/></svg>
<div class="t" id="qm" style="left:663.400px;top:44.400px;font-size:18.500px;font-weight:bold;color:#00007f;line-height:20px">?</div>
<svg class="abs" style="left:461px;top:44px" width="20" height="20" viewBox="461 44 20 20">
<path d="M463.500 48.600L469.200 46.500H477.200L478.700 47.300V57.200L473.500 61H463.500z" fill="#000"/>
<path d="M464.500 49.600h8v10.300h-8z" fill="#0a2cf0"/>
<path d="M466.200 48.200l3.400-1h6.600l-3 1.200z" fill="#0a2cf0"/>
<path d="M474.400 49.600l3.400-1.700v8.800l-3.400 2.600z" fill="#0a2cf0"/>
<path d="M463.200 47.700L465.700 45.200L471.700 51.100L469.200 53.600z" fill="#e8bc14"/>
<path d="M469.200 53.600l2.500-2.500l.3 3z" fill="#bdbdbd"/>
</svg>
<!-- Combo view dock -->
<div class="t" id="cv" style="letter-spacing:0.1px;left:4px;top:118.500px">Combo View</div>
<svg class="abs" style="left:352px;top:121px" width="31" height="13" viewBox="352 121 31 13">
<rect x="353.5" y="122.5" width="10" height="10" rx="2" fill="#f7f6f5" stroke="#5a5955"/>
<rect x="357.5" y="124.5" width="4" height="4" fill="none" stroke="#4a4945"/>
<rect x="355.5" y="126.5" width="4" height="4" fill="#f7f6f5" stroke="#4a4945"/>
<rect x="370.5" y="122.5" width="10" height="10" rx="2" fill="#f7f6f5" stroke="#5a5955"/>
<path d="M373 125l5 5M378 125l-5 5" stroke="#3c3b37" stroke-width="2" fill="none"/>
</svg>
<div id="pane" class="abs"></div>
<div class="tab" style="left:2px;top:144px;width:64px;height:26px;background:linear-gradient(#f0efed,#dedbd7);"></div>
<div class="tab" style="left:66px;top:140px;width:50px;height:31px;background:#f4f3f2;"></div>
<div class="t" id="tproj" style="letter-spacing:0.3px;left:9px;top:146px">Project</div>
<div class="t" id="ttask" style="letter-spacing:-0.4px;left:73px;top:146px">Tasks</div>
<div id="panegray" class="abs"></div>
<div class="btn" style="left:98px;top:191px;width:82px;height:23px"><span id="bhelp" style="letter-spacing:0.15px">Help</span></div>
<div class="btn" style="left:189px;top:191px;width:83px;height:23px"><span id="bclose" style="letter-spacing:-0.4px"><u style="text-underline-offset:2.500px;text-decoration-thickness:1px">C</u>lose</span></div>

<svg width="0" height="0" style="position:absolute"><defs>
<linearGradient id="pgg" x1="0" y1="0" x2="1" y2="1"><stop offset="0" stop-color="#fdfdfd"/><stop offset="1" stop-color="#e4e4e3"/></linearGradient>
<radialGradient id="glow"><stop offset="0" stop-color="#fffbd0"/><stop offset="0.35" stop-color="#f7ec3a"/><stop offset="0.8" stop-color="#f5e030" stop-opacity="0.85"/><stop offset="1" stop-color="#f5d020" stop-opacity="0"/></radialGradient>
<g id="pgicon"><rect x="0.5" y="0.5" width="16" height="18.6" rx="1" fill="url(#pgg)" stroke="#b9b7b3" stroke-width="1"/><path d="M0 19.4h17" stroke="#8a6a5a" stroke-width="0.9" opacity=".8"/><circle cx="14" cy="3.6" r="4.6" fill="url(#glow)"/></g>
<g id="chev"><circle cx="7" cy="7" r="6.900" fill="#fbf3ee"/><path d="M3.900 6.600L7 3.600l3.100 3M3.900 10.600L7 7.600l3.100 3" fill="none" stroke="#e8683a" stroke-width="1.300"/></g>
<g id="spinarr"><path d="M0 3L2.850 0L5.700 3z" fill="#55534f"/><path d="M0 9L2.850 12.200L5.700 9z" fill="#55534f"/></g>
</defs></svg>

<div class="hdr" style="top:233px"><svg class="pg" width="20" height="21" viewBox="-0.5 -0.8 20 21"><use href="#pgicon"/></svg><div class="ht" id="h1" style="letter-spacing:-0.17px">Solver messages</div><svg class="chev" width="14" height="14"><use href="#chev"/></svg></div>
<div class="box" style="top:258px;height:62px"></div>
<div class="t serif" id="s1" style="letter-spacing:0.035px;left:25px;top:269.800px;font-size:13px;color:#3c3b37">Under-constrained sketch with 25 degrees of freedom</div>
<div class="t serif" id="s2" style="left:25px;top:290.800px;font-size:13px;color:#3c3b37">Solved in 0 sec</div>

<div class="hdr" style="top:328px"><svg class="pg" width="20" height="21" viewBox="-0.5 -0.8 20 21"><use href="#pgicon"/></svg><div class="ht" id="h2" style="letter-spacing:0.1px">Edit controls</div><svg class="chev" width="14" height="14"><use href="#chev"/></svg></div>
<div class="box" style="top:353px;height:109px"></div>
<div class="t" id="gs" style="letter-spacing:-0.17px;left:25px;top:371px">Grid size:</div>
<div class="combo" style="top:367.500px"><div class="ct" id="mm">10 mm</div><svg class="abs" style="left:140.700px;top:7.500px" width="5.700" height="12.200" viewBox="0 0 5.700 12.200"><use href="#spinarr"/></svg></div>
<div class="cb" style="top:403px"></div>
<div class="t" id="gsn" style="left:50px;top:401px">Grid snap</div>
<div class="cb" style="top:431px;background:linear-gradient(#f08a5c,#e2622f);border-color:#b5532c"></div>
<svg class="abs" style="left:28px;top:427px" width="20" height="20"><path d="M2.600 10.400L7.400 14.800C10 10.800 12.500 8 15.700 5.200" fill="none" stroke="#6b2c14" stroke-width="2.2" stroke-linecap="round" stroke-linejoin="round"/></svg>
<div class="t" id="ac" style="letter-spacing:0.4px;left:50px;top:429px">Auto constraints</div>

<div class="hdr" style="top:470px"><svg class="pg" width="20" height="21" viewBox="-0.5 -0.8 20 21"><use href="#pgicon"/></svg><div class="ht" id="h3">Constraints</div><svg class="chev" width="14" height="14"><use href="#chev"/></svg></div>
<div class="box" style="top:495px;height:193px"></div>
<div class="t" id="fl" style="letter-spacing:0.35px;left:25px;top:513px">Filter:</div>
<div class="combo" style="top:509.500px"><div class="ct" id="nm" style="letter-spacing:0.2px">Normal</div><svg class="abs" style="left:140.700px;top:7.500px" width="5.700" height="12.200" viewBox="0 0 5.700 12.200"><use href="#spinarr"/></svg></div>
<div class="abs" id="clist" style="left:25px;top:541px;width:319px;height:147px;box-sizing:border-box;border:1px solid #b4b0aa;border-bottom:none;background:#fff;"></div>
<div class="abs" style="left:30.500px;top:553.600px;width:21px;height:4px;background:#f21d0a;border-radius:.5px;box-shadow:0 0 0 .6px #96281a"></div>
<div class="abs" style="left:30.500px;top:579.600px;width:21px;height:4px;background:#f21d0a;border-radius:.5px;box-shadow:0 0 0 .6px #96281a"></div>
<div class="abs" style="left:38.600px;top:596.500px;width:4px;height:20px;background:#f21d0a;border-radius:.5px;box-shadow:0 0 0 .6px #96281a"></div>
<div class="abs" style="left:38.600px;top:622.500px;width:4px;height:20px;background:#f21d0a;border-radius:.5px;box-shadow:0 0 0 .6px #96281a"></div>
<div class="t" id="c5" style="letter-spacing:0.3px;left:59px;top:546.5px">Constraint5</div>
<div class="t" id="c6" style="letter-spacing:0.3px;left:59px;top:572.5px">Constraint6</div>
<div class="t" id="c7" style="letter-spacing:0.3px;left:59px;top:598.5px">Constraint7</div>
<div class="t" id="c8" style="letter-spacing:0.3px;left:59px;top:624.5px">Constraint8</div>

<!-- scrollbar -->
<div class="abs" style="left:369px;top:171px;width:13px;height:517px;box-sizing:border-box;border:1px solid #b4b0aa;border-radius:6.500px;background:#f5f4f3;"></div>
<div class="abs" style="left:369px;top:190px;width:13px;height:486px;box-sizing:border-box;border:1px solid #b4b0aa;border-top:none;border-radius:0 0 6.500px 6.500px;background:linear-gradient(90deg,#dad8d4,#e9e7e5);"></div>
<div class="abs" style="left:369px;top:184px;width:13px;height:435px;box-sizing:border-box;border:1px solid #a29e98;border-radius:6.500px;background:linear-gradient(90deg,#fdfdfd,#e9e7e5);"></div>
<svg class="abs" style="left:369px;top:171px" width="13" height="517"><path d="M4 8.500l2.500-3 2.500 3z" fill="#a9a6a1"/><path d="M3.600 507.500l2.900 3.400 2.900-3.400z" fill="#55534f"/></svg>
<!-- splitter -->
<svg class="abs" style="left:370px;top:395px" width="20" height="14" viewBox="370 395 20 14" shape-rendering="crispEdges"><path d="M374 398.500h3M374 401.500h3M374 404.500h3" stroke="#8f8b86"/><path d="M374 399.500h3M374 402.500h3M374 405.500h3" stroke="#fff"/><path d="M385 400.500h4M385 403.500h4M385 406.500h4" stroke="#d0cdc9"/><path d="M385 401.500h4M385 404.500h4M385 407.500h4" stroke="#fbfbfa"/></svg>
<svg id="view" class="abs" width="781" height="544" viewBox="390 115 781 544" style="left:390px;top:115px">
<defs><linearGradient id="bg3d" x1="0" y1="0" x2="0" y2="1"><stop offset="0" stop-color="#333365"/><stop offset="1" stop-color="#9797ad"/></linearGradient></defs>
<rect x="390" y="115" width="781" height="543.6" fill="url(#bg3d)"/>
<g stroke="#c0c0b9" stroke-width="1" stroke-dasharray="4 4" shape-rendering="crispEdges" fill="none">
<path d="M399.5 112V658.6"/>
<path d="M425.5 112V658.6"/>
<path d="M450.5 112V658.6"/>
<path d="M475.5 112V658.6"/>
<path d="M501.5 112V658.6"/>
<path d="M526.5 112V658.6"/>
<path d="M551.5 112V658.6"/>
<path d="M577.5 112V658.6"/>
<path d="M602.5 112V658.6"/>
<path d="M627.5 112V658.6"/>
<path d="M653.5 112V658.6"/>
<path d="M678.5 112V658.6"/>
<path d="M704.5 112V658.6"/>
<path d="M729.5 112V658.6"/>
<path d="M780.5 112V658.6"/>
<path d="M805.5 112V658.6"/>
<path d="M830.5 112V658.6"/>
<path d="M856.5 112V658.6"/>
<path d="M881.5 112V658.6"/>
<path d="M906.5 112V658.6"/>
<path d="M932.5 112V658.6"/>
<path d="M957.5 112V658.6"/>
<path d="M982.5 112V658.6"/>
<path d="M1008.5 112V658.6"/>
<path d="M1033.5 112V658.6"/>
<path d="M1059.5 112V658.6"/>
<path d="M1084.5 112V658.6"/>
<path d="M1109.5 112V658.6"/>
<path d="M374 129.5H1135"/>
<path d="M374 155.5H1135"/>
<path d="M374 180.5H1135"/>
<path d="M374 206.5H1135"/>
<path d="M374 231.5H1135"/>
<path d="M374 256.5H1135"/>
<path d="M374 282.5H1135"/>
<path d="M374 307.5H1135"/>
<path d="M374 332.5H1135"/>
<path d="M374 358.5H1135"/>
<path d="M374 408.5H1135"/>
<path d="M374 434.5H1135"/>
<path d="M374 459.5H1135"/>
<path d="M374 484.5H1135"/>
<path d="M374 510.5H1135"/>
<path d="M374 535.5H1135"/>
<path d="M374 561.5H1135"/>
<path d="M374 586.5H1135"/>
<path d="M374 611.5H1135"/>
<path d="M374 637.5H1135"/>
</g>
<rect x="390" y="383" width="741" height="2" fill="#d9645f"/>
<rect x="754" y="115" width="2" height="543.6" fill="#60d068"/>
<g stroke="#ffffff" stroke-width="2.45" fill="none" stroke-linecap="butt">
<path d="M806.2 240.7L957.2 350.7"/>
<path d="M935.2 235.8L826.2 338.8"/>
<path d="M697.2 411.9L573.2 602.7"/>
<path d="M992.2 415.8L892.2 482.8L1016.2 572.8" stroke-linejoin="round"/>
<rect x="565.5" y="430.45" width="156.2" height="136.05" stroke-width="3"/>
<circle cx="898.95" cy="509.8" r="88.55" stroke-width="3"/>
</g>
<g fill="#ff2600">
<circle cx="806.5" cy="240.5" r="3.6"/>
<circle cx="957.5" cy="350.5" r="3.6"/>
<circle cx="935.5" cy="235.5" r="3.6"/>
<circle cx="826.5" cy="338.5" r="3.6"/>
<circle cx="566.5" cy="429.5" r="3.6"/>
<circle cx="722.5" cy="429.5" r="3.6"/>
<circle cx="566.5" cy="565.5" r="3.6"/>
<circle cx="722.5" cy="565.5" r="3.6"/>
<circle cx="697.5" cy="411.5" r="3.6"/>
<circle cx="573.5" cy="602.5" r="3.6"/>
<circle cx="899.5" cy="509.5" r="3.6"/>
<circle cx="992.5" cy="415.5" r="3.6"/>
<circle cx="892.5" cy="482.5" r="3.6"/>
<circle cx="1016.5" cy="572.5" r="3.6"/>
<circle cx="754.5" cy="383.5" r="3.6"/>
<rect x="637" y="415.3" width="14" height="3.4"/>
<rect x="637" y="578.2" width="14" height="3.4"/>
<rect x="550" y="491" width="3.1" height="14"/>
<rect x="733" y="491" width="3.1" height="14"/>
</g>
<g id="axiscross"><rect x="1143" y="612" width="2" height="19" fill="#1a8a1a"/><rect x="1142" y="616" width="4" height="4" fill="#2a8a2a"/><rect x="1144" y="630" width="19" height="2" fill="#8e1d1d"/><rect x="1156" y="629" width="4" height="4" fill="#8e2a2a"/><circle cx="1144" cy="631" r="2.2" fill="#1b1b9a"/><g font-family="Liberation Sans, DejaVu Sans, sans-serif" font-size="9.5" fill="#000"><text x="1146.5" y="612.5">Y</text><text x="1146.8" y="630.5">Z</text><text x="1164.5" y="630.5">X</text></g></g>
</svg>
<!-- mdi tabs -->
<div class="abs" style="left:390px;top:658.600px;width:110px;height:28.400px;box-sizing:border-box;border:1px solid #b9b5af;border-top:none;border-radius:0 0 5px 5px;background:linear-gradient(#efeeec,#e3e1de);"></div>
<div class="abs" style="left:499px;top:658.600px;width:157px;height:32px;box-sizing:border-box;border:1px solid #b9b5af;border-top:none;border-radius:0 0 5px 5px;background:#f6f5f4;"></div>
<div class="t" id="tsp" style="left:398.400px;top:664.600px;font-size:15px;letter-spacing:-0.090px">Start page</div>
<div class="t" id="tun" style="left:531.300px;top:665.300px;font-size:15px;letter-spacing:-0.220px">Unnamed : 1*</div>
<svg class="abs" style="left:470px;top:662px" width="180" height="24" viewBox="470 662 180 24">
<path d="M477.800 670.200l8.400 8.400M486.200 670.200l-8.400 8.400" stroke="#5e5c58" stroke-width="3.200" stroke-linecap="butt"/>
<path d="M633.600 670.200l8.600 8.600M642.200 670.200l-8.600 8.600" stroke="#5e5c58" stroke-width="3.200" stroke-linecap="butt"/>
<!-- freecad doc icon -->
<path d="M508 667.600h7.400v2.600h-4.400v2.400h3v2.600h-3v5h-3z" fill="#e8301a" stroke="#b81c0c" stroke-width=".5"/>
<g fill="#1a2fa8"><circle cx="517" cy="675.600" r="3.900"/><path d="M517 670.200v10.800M511.600 675.600h10.800M513.200 671.800l7.600 7.600M520.800 671.800l-7.600 7.600" stroke="#1a2fa8" stroke-width="2"/></g><circle cx="517" cy="675.600" r="1.700" fill="#f6f5f4"/>
</svg>
<!-- right constraint toolbar -->
<svg class="abs" style="left:1171px;top:115px" width="41" height="576" viewBox="1171 115 41 576">
<g stroke="#c8c5c0" stroke-width="1" shape-rendering="crispEdges"><path d="M1187.500 119v4M1190.500 119v4M1193.500 119v4"/></g>
<path d="M1179 455.500h23" stroke="#dcdad7" stroke-width="1" shape-rendering="crispEdges"/><path d="M1179 456.500h23" stroke="#fbfbfa" stroke-width="1" shape-rendering="crispEdges"/>
<g fill="#999999" stroke="#848484" stroke-width=".7" stroke-linejoin="round">
<circle cx="1190.700" cy="143.700" r="4.500"/>
<path d="M1201.700 170.400Q1184.400 168.600 1181.400 188.200L1185.400 189Q1187.800 173.400 1201.700 174.600z"/><circle cx="1186.800" cy="175.100" r="3.600"/>
<rect x="1188.400" y="205.200" width="4.600" height="21.400"/>
<rect x="1180.400" y="250.200" width="21.200" height="4.200"/>
<path d="M1179.200 289.600L1193.600 276.400L1196.400 279.400L1182 292.600zM1185 296.400L1199.400 283.200L1202.200 286.200L1187.800 299.400z"/>
<path d="M1188.600 315.200h4.800v14.200h7.800v4.400h-19.800v-4.400h7.200z"/>
<path d="M1187.200 348.800L1203.400 363L1200.600 366.200L1184.400 352z"/><path d="M1179.600 356.200Q1192.400 356.600 1196.800 369.800L1193 371Q1189.400 360.400 1179.600 360.200z"/>
<rect x="1183.600" y="388.600" width="15" height="4.800"/><rect x="1183.600" y="398.800" width="15" height="5.200"/>
<path d="M1180.800 424.700L1189.700 433.100L1180.800 441.500V436.900L1185.600 433.100L1180.800 429.700zM1201.100 424.700L1192.200 433.100L1201.100 441.500V436.900L1196.300 433.100L1201.100 429.700z"/>
<path d="M1182.200 478.400h18.600v10.600h-18.600z"/><path d="M1184.200 478.400v-2.600a7.200 7.200 0 0 1 14.400 0v2.600h-3.400v-2.600a3.800 3.800 0 0 0-7.600 0v2.600z"/>
<path d="M1180.800 509.400h3.400v4h14.600v-4h3.400v11.800h-3.400v-4h-14.600v4h-3.400z"/>
<path d="M1185.200 540.600h12.200v3.400h-4.200v14.400h4.200v3.400h-12.200v-3.400h4.200v-14.400h-4.200z"/>
<path d="M1201.800 576.600L1200.200 587.200L1197.200 584.200L1189.600 591.600L1192.200 594.400L1180.300 596.800L1182.600 585.600L1185.600 588.600L1193.200 581.200L1190.600 578.400z"/>
<path d="M1191 611.600a11.400 11.400 0 1 0 .01 0zM1191 615a8 8 0 1 1-.01 0z" fill-rule="evenodd"/><path d="M1189.600 622L1196.400 615.800L1198.800 618.600L1192.200 624.600z"/>
</g>
<text transform="translate(1201.200 658.800) rotate(-90) scale(1.060 1.020)" text-anchor="middle" font-family="Liberation Sans, DejaVu Sans, sans-serif" font-size="29" fill="#969696" stroke="#8e8e8e" stroke-width="1.100">A</text>
</svg>
<div id="leftedge" class="abs"></div>
<div id="leftedge2" class="abs"></div>
<div id="rightedge" class="abs"></div>
<div id="rightgray" class="abs"></div>
<div id="bottomred" class="abs"></div>
<div id="bottomgray" class="abs"></div>
</body>
</html>
